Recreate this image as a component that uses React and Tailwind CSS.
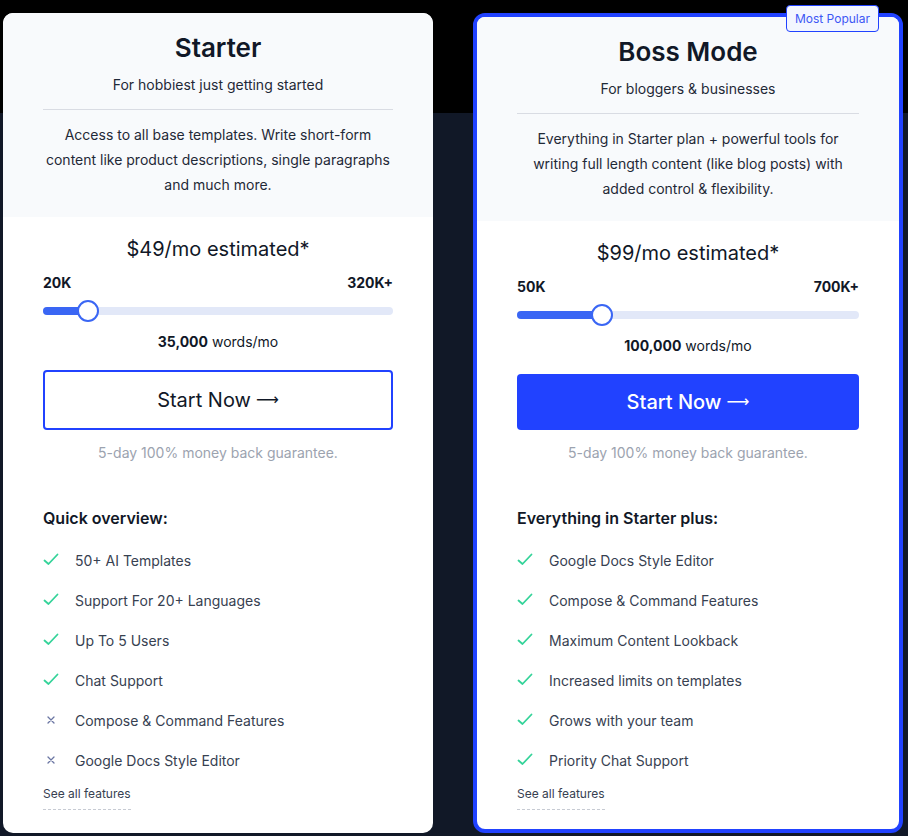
import React from "react";

const plans = [
  {
    name: "Starter",
    tagline: "For hobbiest just getting started",
    blurb: "Access to all base templates. Write short-form content like product descriptions, single paragraphs and much more.",
    price: "$49/mo estimated*",
    min: "20K",
    max: "320K+",
    fill: 12.9,
    words: "35,000",
    heading: "Quick overview:",
    featured: false,
    features: [
      { label: "50+ AI Templates", on: true },
      { label: "Support For 20+ Languages", on: true },
      { label: "Up To 5 Users", on: true },
      { label: "Chat Support", on: true },
      { label: "Compose & Command Features", on: false },
      { label: "Google Docs Style Editor", on: false },
    ],
  },
  {
    name: "Boss Mode",
    tagline: "For bloggers & businesses",
    blurb: "Everything in Starter plan + powerful tools for writing full length content (like blog posts) with added control & flexibility.",
    price: "$99/mo estimated*",
    min: "50K",
    max: "700K+",
    fill: 24.9,
    words: "100,000",
    heading: "Everything in Starter plus:",
    featured: true,
    features: [
      { label: "Google Docs Style Editor", on: true },
      { label: "Compose & Command Features", on: true },
      { label: "Maximum Content Lookback", on: true },
      { label: "Increased limits on templates", on: true },
      { label: "Grows with your team", on: true },
      { label: "Priority Chat Support", on: true },
    ],
  },
];

const Check = () => (
  <svg width="16" height="16" viewBox="0 0 16 16" fill="none" className="shrink-0">
    <path d="M1.5 8.5l4 3.5 9-9.5" stroke="#34d399" strokeWidth="1.8" strokeLinecap="round" strokeLinejoin="round" />
  </svg>
);

const Cross = () => (
  <svg width="16" height="16" viewBox="0 0 16 16" fill="none" className="shrink-0">
    <path d="M5 5l6 6M11 5l-6 6" stroke="#6b76a3" strokeWidth="1.3" strokeLinecap="round" />
  </svg>
);

const PlanCard = ({ plan }) => {
  return (
    <div
      className={`relative flex w-[430px] flex-col bg-white ${
        plan.featured ? "rounded-[12px] border-4 border-[#2142ff]" : "rounded-[10px]"
      }`}
    >
      {/* 最受歡迎標籤 */}
      {plan.featured && (
        <div className="absolute -top-[12px] right-[20px] flex h-[27px] w-[93px] items-center justify-center rounded-[4px] border border-[#2142ff] bg-[#f3f6ff] text-[12px] text-[#3d56f5]">
          Most Popular
        </div>
      )}

      {/* 方案說明 */}
      <div className={`bg-[#f8fafc] px-10 pt-[19px] pb-[20px] text-center ${plan.featured ? "rounded-t-[8px]" : "rounded-t-[10px]"}`}>
        <div className="text-[26px] font-semibold leading-8 text-[#111827]">{plan.name}</div>
        <div className="mt-[11px] text-[14px] leading-5 text-[#1f2937]">{plan.tagline}</div>
        <div className="mt-[14px] border-t border-[#d9dce3]" />
        <p className="mt-[12px] text-[14px] leading-[25px] text-[#1f2937]">{plan.blurb}</p>
      </div>

      {/* 價格與滑桿 */}
      <div className="px-10 pt-[18px]">
        <div className="text-center text-[20px] leading-7 text-[#111827]">{plan.price}</div>
        <div className="mt-[10px] flex justify-between text-[14px] font-bold leading-5 text-[#111827]">
          <span>{plan.min}</span>
          <span>{plan.max}</span>
        </div>
        <div className="relative mt-[7px] flex h-[22px] items-center">
          <div className="h-2 w-full rounded-full bg-[#e2e8f8]" />
          <div className="absolute left-0 h-2 rounded-full bg-[#3a66f4]" style={{ width: `${plan.fill}%` }} />
          <div
            className="absolute h-[22px] w-[22px] -translate-x-1/2 rounded-full border-2 border-[#3a66f4] bg-white"
            style={{ left: `${plan.fill}%` }}
          />
        </div>
        <div className="mt-[10px] text-center text-[14px] leading-5 text-[#111827]">
          <span className="font-bold">{plan.words}</span> words/mo
        </div>
        <button
          className={`mt-[18px] flex w-full items-center justify-center gap-[5px] rounded-[4px] text-[20px] ${
            plan.featured
              ? "h-[56px] bg-[#2142ff] font-medium text-white"
              : "h-[60px] border-2 border-[#2142ff] bg-white text-[#111827]"
          }`}
        >
          Start Now
          <span className="font-['DejaVu_Sans'] text-[16px] font-normal">⟶</span>
        </button>
        <div className="mt-[13px] text-center text-[14px] leading-5 text-[#9ca3af]">
          5-day 100% money back guarantee.
        </div>
      </div>

      {/* 功能列表 */}
      <div className="px-10 pt-[43px]">
        <div className="text-[16px] font-semibold leading-6 text-[#111827]">{plan.heading}</div>
        <ul className="mt-[10px]">
          {plan.features.map((f) => (
            <li key={f.label} className="flex h-10 items-center gap-4 text-[14px] text-[#374151]">
              {f.on ? <Check /> : <Cross />}
              <span>{f.label}</span>
            </li>
          ))}
        </ul>
        <div className="mt-[5px] inline-block border-b border-dashed border-[#c7cbd3] pb-[7px] text-[12px] leading-4 text-[#374151]">
          See all features
        </div>
      </div>
    </div>
  );
};

export default function App() {
  return (
    <div
      className="flex h-[836px] w-[908px] items-stretch gap-10 pl-[3px] pt-[13px] pb-[3px] bg-[linear-gradient(to_bottom,#000_113px,#111827_113px)]"
      style={{ fontFamily: "Inter, 'Noto Sans', sans-serif" }}
    >
      {plans.map((plan) => (
        <PlanCard key={plan.name} plan={plan} />
      ))}
    </div>
  );
}
